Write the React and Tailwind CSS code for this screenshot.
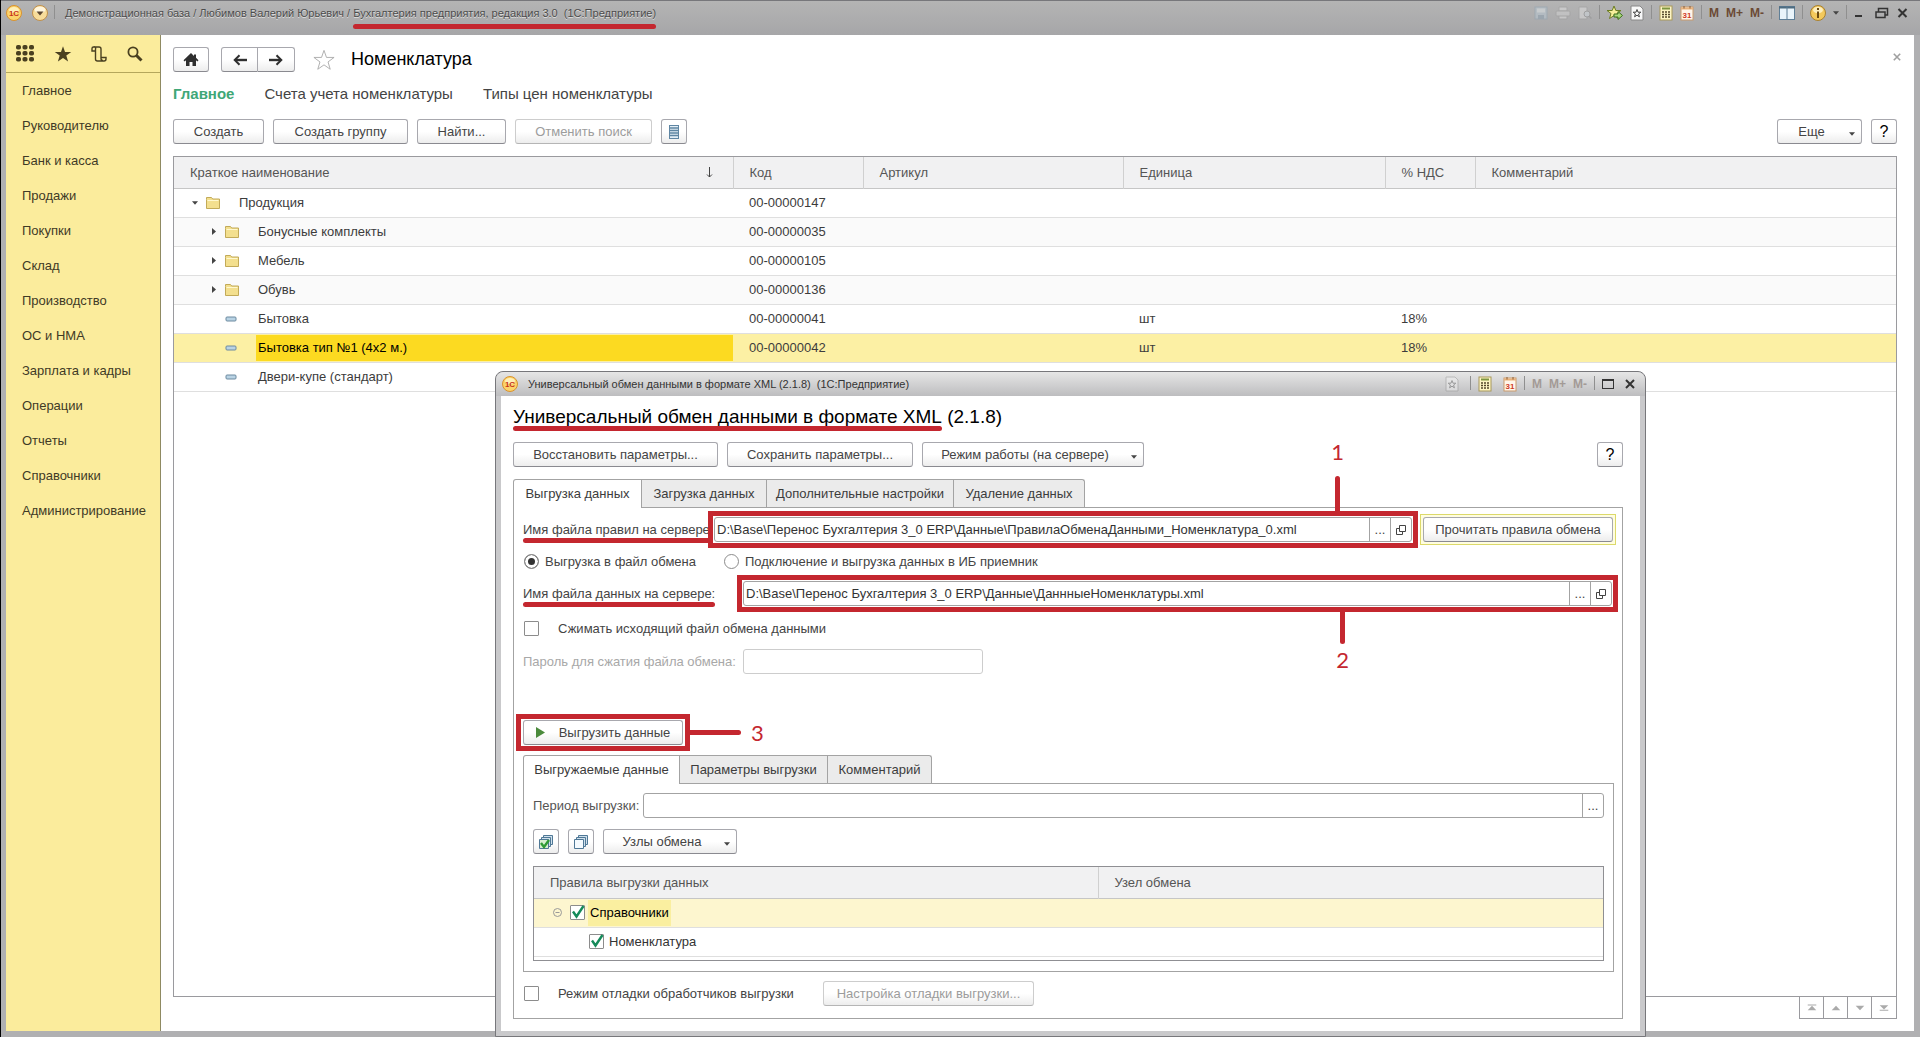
import React from "react";

const sections = [
  "Главное",
  "Руководителю",
  "Банк и касса",
  "Продажи",
  "Покупки",
  "Склад",
  "Производство",
  "ОС и НМА",
  "Зарплата и кадры",
  "Операции",
  "Отчеты",
  "Справочники",
  "Администрирование",
];

const items = [
  { name: "Продукция", code: "00-00000147", type: "root" },
  { name: "Бонусные комплекты", code: "00-00000035", type: "folder" },
  { name: "Мебель", code: "00-00000105", type: "folder" },
  { name: "Обувь", code: "00-00000136", type: "folder" },
  { name: "Бытовка", code: "00-00000041", type: "item", unit: "шт", vat: "18%" },
  {
    name: "Бытовка тип №1 (4x2 м.)",
    code: "00-00000042",
    type: "item",
    unit: "шт",
    vat: "18%",
    selected: true,
  },
  { name: "Двери-купе (стандарт)", type: "item" },
];

/* ---------- Icons ---------- */

const LogoIcon = () => (
  <svg viewBox="0 0 16 16" className="w-4 h-4 shrink-0">
    <circle cx="8" cy="8" r="7.5" fill="#fbd36b" stroke="#d9922e" />
    <ellipse cx="8" cy="5" rx="5" ry="3" fill="#fff0b8" />
    <text x="8" y="11" fontSize="8" fontWeight="bold" textAnchor="middle" fill="#c8321c">
      1С
    </text>
  </svg>
);

const MenuIcon = () => (
  <svg viewBox="0 0 16 16" className="w-4 h-4">
    <circle cx="8" cy="8" r="7.5" fill="#f7dc9a" stroke="#c08f4a" />
    <ellipse cx="8" cy="4.8" rx="5.5" ry="3.2" fill="#fff6dd" />
    <path d="M4.5 6.5h7L8 10.5z" fill="#5c4630" />
  </svg>
);

const HomeIcon = () => (
  <svg viewBox="0 0 16 14" className="w-4 h-3.5" fill="#2f2f2f">
    <path d="M8 0L0.500 7.200l1.200 1.300L3 7.300V13h3.500V9h3v4H13V7.300l1.300 1.200 1.200-1.300L13 4.800V1.500h-2v1.400z" />
  </svg>
);

const ArrowIcon = ({ flip }) => (
  <svg viewBox="0 0 14 12" className={`w-3.5 h-3 ${flip ? "rotate-180" : ""}`}>
    <path d="M14 6H3" stroke="#2f2f2f" strokeWidth="2.400" />
    <path d="M6.500 1.200L1.700 6l4.800 4.800" fill="none" stroke="#2f2f2f" strokeWidth="2" />
  </svg>
);

const StarIcon = ({ className }) => (
  <svg viewBox="0 0 24 24" className={className}>
    <path d="M12 1.500l2.700 7.700H23l-6.600 4.900 2.400 8L12 17.300 5.200 22.100l2.400-8L1 9.200h8.300z" />
  </svg>
);

const FolderIcon = () => (
  <svg viewBox="0 0 14 12" className="w-3.5 h-3 shrink-0">
    <path d="M.5 2.500v-2h5l1.200 1.500h6.800v9.500H.5z" fill="#f3df8e" stroke="#c2aa58" />
    <path d="M1.500 3.500h11" stroke="#fff8cf" />
  </svg>
);

const ItemIcon = () => (
  <svg viewBox="0 0 12 6" className="w-3 h-1.5 shrink-0">
    <rect x="1" y="1" width="10" height="4" rx="1" fill="#b9d3e4" stroke="#6c8aa0" />
  </svg>
);

const CaretIcon = () => (
  <svg viewBox="0 0 7 4" className="w-1.5 h-1 shrink-0" fill="#444">
    <path d="M0 0h7L3.500 4z" />
  </svg>
);

const CalcIcon = () => (
  <svg viewBox="0 0 14 16" className="w-3.5 h-4">
    <rect x="1" y="1" width="12" height="14" fill="#fdf5c4" stroke="#a8985a" />
    <path d="M3 3.500h8" stroke="#7d9440" strokeWidth="2" />
    <path d="M3 7h8M3 9.500h8M3 12h8" stroke="#54482c" strokeWidth="1.500" strokeDasharray="2 1" />
  </svg>
);

const CalendarIcon = () => (
  <svg viewBox="0 0 14 16" className="w-3.5 h-4">
    <rect x="1" y="2" width="12" height="13" fill="#fff6ea" stroke="#c99a6c" />
    <path d="M1 3.500h12" stroke="#e8b27c" strokeWidth="2" />
    <path d="M4 1v2.500M10 1v2.500" stroke="#8a5a30" />
    <text x="7" y="13" fontSize="8" fontWeight="bold" textAnchor="middle" fill="#cf3b1f">
      31
    </text>
  </svg>
);

const FavPageIcon = () => (
  <svg viewBox="0 0 14 16" className="w-3.5 h-4">
    <path d="M1 1h9l3 3v11H1z" fill="#f7f7f7" stroke="#888" />
    <path d="M7 4.500l1 2.700h2.800L8.600 9l.8 2.800L7 10.200l-2.400 1.600L5.400 9 3.200 7.200H6z" fill="none" stroke="#444" />
  </svg>
);

const FavAddIcon = () => (
  <svg viewBox="0 0 16 16" className="w-4 h-4">
    <path d="M7 1l1.800 4.500H14L10 8.500l1.500 5L7 10.600 2.500 13.500 4 8.500 0 5.500h5.200z" fill="#f6ef9a" stroke="#6b7d22" />
    <path d="M7 9h4V6.500l4.500 4-4.500 4V12H7z" fill="#a9d97c" stroke="#3c6f1c" />
  </svg>
);

const SaveIcon = () => (
  <svg viewBox="0 0 14 14" className="w-3.5 h-3.5 opacity-50">
    <rect x="1" y="1" width="12" height="12" fill="#b8c8d4" stroke="#8fa3b1" />
    <path d="M3 2.500h8v4H3z" fill="#dfe6ea" />
    <path d="M4 9h6v4H4z" fill="#8ba0b0" />
  </svg>
);

const PrintIcon = () => (
  <svg viewBox="0 0 16 14" className="w-4 h-3.5 opacity-40">
    <path d="M4 1h8v4H4zM4 9h8v4H4z" fill="#eee" stroke="#999" />
    <rect x="1" y="5" width="14" height="5" rx="1" fill="#ddd" stroke="#999" />
  </svg>
);

const PreviewIcon = () => (
  <svg viewBox="0 0 14 14" className="w-3.5 h-3.5 opacity-40">
    <path d="M1 1h8v12H1z" fill="#eee" stroke="#999" />
    <circle cx="9" cy="8" r="3" fill="#dde7ee" stroke="#888" />
    <path d="M11 10l2.500 2.500" stroke="#888" strokeWidth="1.500" />
  </svg>
);

const PanelsIcon = () => (
  <svg viewBox="0 0 16 14" className="w-4 h-3.5">
    <rect x=".5" y=".5" width="15" height="13" fill="#eaf4fa" stroke="#5f7f97" />
    <path d="M0 1.500h16" stroke="#4f6c80" strokeWidth="2" />
    <path d="M8 1v13" stroke="#5f7f97" />
  </svg>
);

const InfoIcon = () => (
  <svg viewBox="0 0 16 16" className="w-4 h-4">
    <circle cx="8" cy="8" r="7.500" fill="#f3c95c" stroke="#a9812f" />
    <ellipse cx="8" cy="5" rx="5" ry="3.200" fill="#fdeebd" />
    <path d="M8 3v2M8 6.500V13" stroke="#6a4a12" strokeWidth="2" />
  </svg>
);

const CloseIcon = ({ className }) => (
  <svg viewBox="0 0 10 10" className={className}>
    <path d="M1 1l8 8M9 1L1 9" fill="none" stroke="currentColor" strokeWidth="2" />
  </svg>
);

const OpenIcon = () => (
  <svg viewBox="0 0 10 10" className="w-2.5 h-2.5" fill="none" stroke="#444">
    <path d="M3.500.5h6v6h-6zM3.500 3.500h-3v6h6v-3" />
  </svg>
);

const StackIcon = ({ checked }) => (
  <svg viewBox="0 0 16 16" className="w-4 h-4" fill="#cfe0ec" stroke="#4f7896">
    <path d="M5.500 1.500h9v9h-9z" />
    <path d="M3.500 3.500h9v9h-9z" />
    <path d="M1.500 5.500h9v9h-9z" fill={checked ? "#d7efd0" : "#f4fafe"} />
    {checked && <path d="M3 9l3 4 5-7" fill="none" stroke="#2f9a35" strokeWidth="2.400" />}
  </svg>
);

/* ---------- Controls ---------- */

const Button = ({ className = "", disabled, children, ...rest }) => (
  <button
    type="button"
    disabled={disabled}
    className={`h-[25px] shrink-0 flex items-center justify-center rounded-[3px] border bg-gradient-to-b from-white from-50% to-[#ededed] whitespace-nowrap ${
      disabled
        ? "border-[#cdcdcd] border-b-[#b5b5b5] text-[#9c9c9c]"
        : "border-[#a8a8ae] border-b-[#8a8a90] text-[#444]"
    } ${className}`}
    {...rest}
  >
    {children}
  </button>
);

const MenuButton = ({ className, children }) => (
  <Button className={`relative pr-4 ${className}`} aria-haspopup="menu">
    {children}
    <span className="absolute right-1.5 top-3">
      <CaretIcon />
    </span>
  </Button>
);

const Separator = () => <span className="w-px h-3.5 bg-[#8f8f8f] self-start" />;

const TickBox = ({ id, checked }) => (
  <span className="relative w-[15px] h-[15px] shrink-0">
    <input
      id={id}
      type="checkbox"
      defaultChecked={checked}
      className="block appearance-none w-[15px] h-[15px] bg-white border border-[#8c8c8c] rounded-[1px]"
    />
    {checked && (
      <svg viewBox="0 0 15 15" className="absolute inset-0 w-[15px] h-[15px] pointer-events-none">
        <path d="M3 6.500l3.500 5L13.500 1" fill="none" stroke="#158a5a" strokeWidth="2.400" />
      </svg>
    )}
  </span>
);

const Radio = ({ id, checked }) => (
  <input
    id={id}
    type="radio"
    name="mode"
    defaultChecked={checked}
    className="appearance-none w-[15px] h-[15px] shrink-0 rounded-full border border-[#8c8c8c] bg-white checked:bg-[#333] checked:shadow-[inset_0_0_0_3px_white]"
  />
);

const Tabs = ({ tabs }) => (
  <div role="tablist" className="flex">
    {tabs.map((tab, idx) => (
      <button
        key={tab.title}
        type="button"
        role="tab"
        aria-selected={idx === 0}
        className={`border-t border-r border-[#a3a3a3] text-[#3c3c3c] whitespace-nowrap ${tab.width} ${
          idx === 0 ? "relative z-10 h-[29px] -mb-px border-l bg-white rounded-tl-[3px]" : "h-7 bg-[#ebebeb]"
        } ${idx === tabs.length - 1 ? "rounded-tr-[3px]" : ""}`}
      >
        {tab.title}
      </button>
    ))}
  </div>
);

const PathField = ({ id, value }) => (
  <div className="flex flex-1 h-[25px] border border-[#a3a3a3] rounded-[3px] bg-white">
    <input id={id} defaultValue={value} className="flex-1 min-w-0 px-0.5 text-[#333] outline-none" />
    <button type="button" aria-label="Выбрать" className="w-[21px] border-l border-[#a3a3a3] text-[#444]">
      ...
    </button>
    <button
      type="button"
      aria-label="Открыть"
      className="w-[21px] border-l border-[#a3a3a3] flex items-center justify-center"
    >
      <OpenIcon />
    </button>
  </div>
);

/* ---------- Red marks ---------- */

const Underline = ({ children, className = "-bottom-1.5" }) => (
  <span className="relative">
    {children}
    <span className={`absolute inset-x-0 h-[5px] rounded-full bg-[#c4272f] ${className}`} />
  </span>
);

const StepNumber = ({ children }) => (
  <span className="font-['Lato',sans-serif] text-[22px] leading-8 text-[#c4272f]">{children}</span>
);

/* ---------- Main window ---------- */

const TitleBar = () => (
  <header className="h-[35px] shrink-0 flex items-start bg-gradient-to-b from-[#b4b4b4] to-[#a6a6a8] border-t border-[#77777b] pl-[5px] pr-3 pt-1">
    <div className="flex items-center gap-1.5 h-4">
      <LogoIcon />
      <button type="button" aria-label="Меню" className="ml-1">
        <MenuIcon />
      </button>
      <Separator />
    </div>
    <p className="ml-2.5 h-4 text-[11px] leading-4 whitespace-pre text-[#4c4c4c] [text-shadow:0_1px_0_#ddd]">
      Демонстрационная база / Любимов Валерий Юрьевич /{" "}
      <Underline className="-bottom-2.5">Бухгалтерия предприятия, редакция 3.0&nbsp; (1С:Предприятие)</Underline>
    </p>
    <div className="ml-auto flex items-center gap-[7px] h-4 text-xs text-[#6b4a35] font-bold">
      <SaveIcon />
      <PrintIcon />
      <PreviewIcon />
      <Separator />
      <FavAddIcon />
      <FavPageIcon />
      <Separator />
      <CalcIcon />
      <CalendarIcon />
      <Separator />
      <button type="button">M</button>
      <button type="button">M+</button>
      <button type="button">M-</button>
      <Separator />
      <PanelsIcon />
      <Separator />
      <InfoIcon />
      <CaretIcon />
      <Separator />
      <svg viewBox="0 0 54 12" className="w-[54px] h-3" fill="none" stroke="#333" strokeWidth="2">
        <path d="M1 9h7M44.500 2l8 8M52.500 2l-8 8" />
        <path d="M22 5h9v5.500h-9zM24.500 5V1.500h9V8H31" strokeWidth="1.500" />
      </svg>
    </div>
  </header>
);

const Sidebar = () => (
  <aside className="w-[155px] shrink-0 bg-[#fbec9c] border-r border-[#8f8a62]">
    <div className="h-[38px] flex items-center justify-between pl-2.5 pr-[17px] border-b border-[#b5a75c]">
      <svg viewBox="0 0 18 17" className="w-[18px] h-[17px]" fill="#4a4020">
        {[0, 6.5, 13].map((x) =>
          [0, 6, 12].map((y) => <rect key={`${x}-${y}`} x={x} y={y} width="5" height="4.600" rx="1.800" />)
        )}
      </svg>
      <StarIcon className="w-[18px] h-[18px] fill-[#4a4020]" />
      <svg viewBox="0 0 16 16" className="w-4 h-4" fill="none" stroke="#4a4020" strokeWidth="1.400">
        <path d="M4 5H1V2.500A1.500 1.500 0 0 1 2.500 1H8a2 2 0 0 1 2 2v8.500h5v1.500a2 2 0 0 1-2 2H6.500a2 2 0 0 1-2-2V3A1.500 1.500 0 0 0 2.500 1M10 11.500v1a2 2 0 0 0 2 2" />
      </svg>
      <svg viewBox="0 0 16 16" className="w-4 h-4" fill="none" stroke="#4a4020">
        <circle cx="6" cy="6" r="4.600" strokeWidth="1.800" />
        <path d="M9.500 9.500l5 5" strokeWidth="3" />
      </svg>
    </div>
    <nav className="flex flex-col">
      {sections.map((section) => (
        <a key={section} href="#" className="h-[35px] leading-[35px] pl-4 text-[#3f3a26]">
          {section}
        </a>
      ))}
    </nav>
  </aside>
);

const NameCell = ({ item }) => {
  if (item.type === "root") {
    return (
      <div className="flex items-center h-7 pl-[18px]">
        <CaretIcon />
        <span className="ml-2">
          <FolderIcon />
        </span>
        <span className="ml-[19px]">{item.name}</span>
      </div>
    );
  }
  return (
    <div className="flex items-center h-7 pl-[38px]">
      <span className="w-[13px]">
        {item.type === "folder" && (
          <svg viewBox="0 0 4 7" className="w-1 h-[7px]" fill="#444">
            <path d="M0 0v7l4-3.500z" />
          </svg>
        )}
      </span>
      <span className="w-[31px]">{item.type === "folder" ? <FolderIcon /> : <ItemIcon />}</span>
      <span
        className={`flex-1 pl-0.5 h-[26px] leading-[26px] ${item.selected ? "bg-[#fcda21] text-black" : ""}`}
      >
        {item.name}
      </span>
    </div>
  );
};

const ItemsTable = () => (
  <div className="flex-1 border border-[#9a9a9e] bg-white">
    <table className="w-full table-fixed border-collapse text-left text-[#3c3c3c]">
      <colgroup>
        <col className="w-[559px]" />
        <col className="w-[130px]" />
        <col className="w-[260px]" />
        <col className="w-[262px]" />
        <col className="w-[90px]" />
        <col />
      </colgroup>
      <thead>
        <tr className="h-[31px] bg-[#f1f1f2] border-b border-[#c6c6c6] text-[#555]">
          <th className="font-normal pl-4 border-r border-[#d0d0d0]">
            <span className="flex items-center justify-between pr-5">
              Краткое наименование
              <svg viewBox="0 0 7 11" className="w-[7px] h-[11px]" fill="none" stroke="#444">
                <path d="M3.500 0v10M1 7.500l2.500 2.500L6 7.500" />
              </svg>
            </span>
          </th>
          <th className="font-normal pl-4 border-r border-[#d0d0d0]">Код</th>
          <th className="font-normal pl-4 border-r border-[#d0d0d0]">Артикул</th>
          <th className="font-normal pl-4 border-r border-[#d0d0d0]">Единица</th>
          <th className="font-normal pl-4 border-r border-[#d0d0d0]">% НДС</th>
          <th className="font-normal pl-4">Комментарий</th>
        </tr>
      </thead>
      <tbody>
        {items.map((item, idx) => (
          <tr
            key={item.name}
            className={`h-[29px] border-b border-[#dfdfdf] ${
              item.selected ? "bg-[#fcf0a4]" : idx % 2 && idx < 4 ? "bg-[#fafafa]" : ""
            }`}
          >
            <td className="p-0">
              <NameCell item={item} />
            </td>
            <td className="pl-4">{item.code}</td>
            <td />
            <td className="pl-4">{item.unit}</td>
            <td className="pl-4">{item.vat}</td>
            <td />
          </tr>
        ))}
      </tbody>
    </table>
  </div>
);

const scrollArrows = [
  { label: "В начало", d: "M1 1h12v1.500H1zM7 3l6 6H1z" },
  { label: "Вверх", d: "M7 3l6 6H1z" },
  { label: "Вниз", d: "M7 9l6-6H1z" },
  { label: "В конец", d: "M7 8l6-6H1zM1 8.500h12V10H1z" },
];

const ItemsView = () => (
  <main className="flex-1 min-w-0 flex flex-col bg-white pl-3 pr-[17px] pt-3 pb-3">
    <div className="flex items-center">
      <Button className="w-9" aria-label="Домой">
        <HomeIcon />
      </Button>
      <Button className="w-[37px] ml-3 rounded-r-none" aria-label="Назад">
        <ArrowIcon />
      </Button>
      <Button className="w-[37px] rounded-l-none border-l-0" aria-label="Вперед">
        <ArrowIcon flip />
      </Button>
      <StarIcon className="w-[22px] h-[22px] ml-[18px] fill-white stroke-[#aaa]" />
      <h1 className="ml-4 text-lg leading-[25px] text-black">Номенклатура</h1>
      <button type="button" aria-label="Закрыть" className="ml-auto self-start mt-1.5 -mr-1 text-[#a0a0a0]">
        <CloseIcon className="w-2 h-2" />
      </button>
    </div>
    <nav className="flex gap-[30px] mt-2.5 text-[15px] leading-6 text-[#444]">
      <a href="#" className="font-bold text-[#3fa777]">
        Главное
      </a>
      <a href="#">Счета учета номенклатуры</a>
      <a href="#">Типы цен номенклатуры</a>
    </nav>
    <div className="flex gap-[9px] mt-[13px] mb-3">
      <Button className="w-[91px]">Создать</Button>
      <Button className="w-[135px]">Создать группу</Button>
      <Button className="w-[89px]">Найти...</Button>
      <Button className="w-[137px]" disabled>
        Отменить поиск
      </Button>
      <Button className="w-[26px]" aria-label="Список">
        <svg viewBox="0 0 10 14" className="w-2.5 h-3.5">
          <rect x=".5" y=".5" width="9" height="13" fill="#e3eef6" stroke="#5f86a3" />
          <path d="M1 3h8M1 5.500h8M1 8h8M1 10.500h8" stroke="#5f86a3" strokeWidth="1.300" />
        </svg>
      </Button>
      <MenuButton className="w-[85px] ml-auto">Еще</MenuButton>
      <Button className="w-[26px] text-base text-black">?</Button>
    </div>
    <ItemsTable />
    <div className="flex justify-end">
      <div className="flex border border-t-0 border-[#9a9a9e] divide-x divide-[#9a9a9e]">
        {scrollArrows.map((arrow) => (
          <button
            key={arrow.label}
            type="button"
            aria-label={arrow.label}
            className="w-6 h-[21px] flex items-center justify-center"
          >
            <svg viewBox="0 0 14 12" className="w-2.5 h-2.5" fill="#aaa">
              <path d={arrow.d} />
            </svg>
          </button>
        ))}
      </div>
    </div>
  </main>
);

/* ---------- Exchange dialog ---------- */

const RulesTable = () => (
  <div className="mt-3 h-[95px] border border-[#8f8f93]">
    <table className="w-full table-fixed border-collapse text-left text-[#333]">
      <colgroup>
        <col className="w-[564px]" />
        <col />
      </colgroup>
      <thead>
        <tr className="h-[31px] bg-[#f1f1f2] border-b border-[#c6c6c6] text-[#555]">
          <th className="font-normal pl-4 border-r border-[#d0d0d0]">Правила выгрузки данных</th>
          <th className="font-normal pl-4">Узел обмена</th>
        </tr>
      </thead>
      <tbody>
        <tr className="h-[29px] bg-[#fdf6cf] border-b border-[#dfdfdf]">
          <td className="p-0">
            <div className="flex items-center pl-[19px]">
              <svg viewBox="0 0 9 9" className="w-[9px] h-[9px] mr-2" fill="none" stroke="#999">
                <circle cx="4.500" cy="4.500" r="4" />
                <path d="M2.500 4.500h4" />
              </svg>
              <TickBox id="catalogs" checked />
              <label htmlFor="catalogs" className="ml-[3px] px-0.5 leading-[26px] bg-[#faefa0] text-black">
                Справочники
              </label>
            </div>
          </td>
          <td />
        </tr>
        <tr className="h-[29px] border-b border-[#dfdfdf]">
          <td className="p-0">
            <div className="flex items-center pl-[55px]">
              <TickBox id="items" checked />
              <label htmlFor="items" className="ml-[3px] px-0.5">
                Номенклатура
              </label>
            </div>
          </td>
          <td />
        </tr>
      </tbody>
    </table>
  </div>
);

const ExportTab = () => (
  <div className="mt-1 mr-1">
    <Tabs
      tabs={[
        { title: "Выгружаемые данные", width: "w-[157px]" },
        { title: "Параметры выгрузки", width: "w-[148px]" },
        { title: "Комментарий", width: "w-[104px]" },
      ]}
    />
    <div className="border border-[#a3a3a3] px-[9px] pt-[9px] pb-2.5">
      <div className="flex items-center">
        <label htmlFor="period" className="w-[110px] text-[#555] whitespace-nowrap">
          Период выгрузки:
        </label>
        <div className="flex flex-1 h-[25px] border border-[#a3a3a3] rounded-[3px]">
          <input id="period" className="flex-1 min-w-0 px-1 outline-none" />
          <button
            type="button"
            aria-label="Выбрать период"
            className="w-[21px] border-l border-[#a3a3a3] text-[#444]"
          >
            ...
          </button>
        </div>
      </div>
      <div className="flex gap-[9px] mt-[11px]">
        <Button className="w-[26px]" aria-label="Отметить все">
          <StackIcon checked />
        </Button>
        <Button className="w-[26px]" aria-label="Снять отметки">
          <StackIcon />
        </Button>
        <MenuButton className="w-[134px]">Узлы обмена</MenuButton>
      </div>
      <RulesTable />
    </div>
  </div>
);

const ExchangeForm = () => (
  <div className="flex-1 flex flex-col border border-[#a3a3a3] pl-[9px] pr-1 pt-[3px] pb-2.5 text-[#444]">
    <div className="flex items-center mr-0.5">
      <label htmlFor="rules" className="w-[185px] whitespace-nowrap">
        <Underline>Имя файла правил на сервере:</Underline>
      </label>
      <div className="relative flex-1 flex border-[5px] border-[#c4272f] p-px">
        <PathField
          id="rules"
          value="D:\Base\Перенос Бухгалтерия 3_0 ERP\Данные\ПравилаОбменаДанными_Номенклатура_0.xml"
        />
        <span className="absolute right-[69px] bottom-full flex flex-col items-center">
          <StepNumber>1</StepNumber>
          <span className="w-[5px] h-10 mt-2 rounded-t-full bg-[#c4272f]" />
        </span>
      </div>
      <div className="ml-0.5 border border-[#dcd96a] bg-[#fffde0] p-0.5">
        <Button className="w-[190px]">Прочитать правила обмена</Button>
      </div>
    </div>

    <div className="flex items-center h-[27px] pl-px">
      <div className="flex items-center gap-1.5 w-[200px]">
        <Radio id="to-file" checked />
        <label htmlFor="to-file">Выгрузка в файл обмена</label>
      </div>
      <div className="flex items-center gap-1.5">
        <Radio id="to-base" />
        <label htmlFor="to-base">Подключение и выгрузка данных в ИБ приемник</label>
      </div>
    </div>

    <div className="flex items-center">
      <label htmlFor="data" className="w-[214px] whitespace-nowrap">
        <Underline>Имя файла данных на сервере:</Underline>
      </label>
      <div className="relative flex-1 flex border-[5px] border-[#c4272f] p-px">
        <PathField id="data" value="D:\Base\Перенос Бухгалтерия 3_0 ERP\Данные\ДаннныеНоменклатуры.xml" />
        <span className="absolute right-[264px] top-full flex flex-col items-center">
          <span className="w-[5px] h-[37px] rounded-b-full bg-[#c4272f]" />
          <StepNumber>2</StepNumber>
        </span>
      </div>
    </div>

    <div className="flex items-center h-[33px] pl-px">
      <TickBox id="compress" />
      <label htmlFor="compress" className="ml-[19px]">
        Сжимать исходящий файл обмена данными
      </label>
    </div>

    <div className="flex items-center mt-1">
      <label htmlFor="password" className="w-[220px] text-[#a8a8a8]">
        Пароль для сжатия файла обмена:
      </label>
      <input
        id="password"
        type="password"
        disabled
        className="w-60 h-[25px] px-1 border border-[#cdcdcd] rounded-[3px] bg-white"
      />
    </div>

    <div className="flex items-center mt-10 -ml-[7px]">
      <div className="relative border-[5px] border-[#c4272f] px-0.5 py-px">
        <Button className="w-40">
          <svg viewBox="0 0 9 11" className="w-[9px] h-[11px] mr-3.5" fill="#4b8a3c">
            <path d="M0 0v11l9-5.500z" />
          </svg>
          Выгрузить данные
        </Button>
        <span className="absolute left-full inset-y-0 flex items-center">
          <span className="w-14 h-[5px] rounded-r-full bg-[#c4272f]" />
          <span className="ml-2.5 flex">
            <StepNumber>3</StepNumber>
          </span>
        </span>
      </div>
    </div>

    <ExportTab />

    <div className="flex items-center mt-[9px] pl-px">
      <TickBox id="debug" />
      <label htmlFor="debug" className="w-[265px] ml-[19px]">
        Режим отладки обработчиков выгрузки
      </label>
      <Button className="w-[211px]" disabled>
        Настройка отладки выгрузки...
      </Button>
    </div>
  </div>
);

const ExchangeDialog = () => (
  <div
    role="dialog"
    aria-label="Универсальный обмен данными в формате XML"
    className="absolute left-[494px] right-[274px] top-[371px] bottom-0 flex flex-col rounded-t-lg border border-[#77777b] bg-[#c9c9cb]"
  >
    <div className="h-6 shrink-0 flex items-center rounded-t-lg bg-gradient-to-b from-[#e6e6e6] to-[#bdbdbf] pl-1.5 pr-2.5 text-[#333]">
      <LogoIcon />
      <p className="ml-2.5 text-[11px] whitespace-pre">
        Универсальный обмен данными в формате XML (2.1.8)&nbsp; (1С:Предприятие)
      </p>
      <div className="ml-auto flex items-center gap-[7px] h-4 text-xs font-bold text-[#a39a96]">
        <span className="mr-1 opacity-40">
          <FavPageIcon />
        </span>
        <Separator />
        <CalcIcon />
        <span className="ml-1">
          <CalendarIcon />
        </span>
        <Separator />
        <span>M</span>
        <span>M+</span>
        <span>M-</span>
        <Separator />
        <button type="button" aria-label="Развернуть" className="w-3 h-2.5 border border-t-2 border-[#333]" />
        <button type="button" aria-label="Закрыть окно" className="ml-1 text-[#333]">
          <CloseIcon className="w-2.5 h-2.5" />
        </button>
      </div>
    </div>
    <div className="flex-1 flex flex-col bg-white mx-[5px] mb-[5px] pl-3 pr-[17px] pt-[7px] pb-3">
      <h2 className="text-[19px] leading-7 text-black">
        <Underline className="-bottom-1">Универсальный обмен данными в формате XML</Underline> (2.1.8)
      </h2>
      <div className="flex gap-[9px] mt-[11px] mb-3">
        <Button className="w-[205px]">Восстановить параметры...</Button>
        <Button className="w-[186px]">Сохранить параметры...</Button>
        <MenuButton className="w-[222px]">Режим работы (на сервере)</MenuButton>
        <Button className="w-[26px] ml-auto text-base text-black">?</Button>
      </div>
      <Tabs
        tabs={[
          { title: "Выгрузка данных", width: "w-[129px]" },
          { title: "Загрузка данных", width: "w-[125px]" },
          { title: "Дополнительные настройки", width: "w-[187px]" },
          { title: "Удаление данных", width: "w-[131px]" },
        ]}
      />
      <ExchangeForm />
    </div>
  </div>
);

const App = () => (
  <div className="relative min-h-screen flex flex-col bg-[#b0b0b2] font-['Liberation_Sans',Arial,sans-serif] text-[13px] border-l border-black">
    <TitleBar />
    <div className="flex-1 flex pl-[5px] pr-1.5 pb-1.5">
      <Sidebar />
      <ItemsView />
    </div>
    <ExchangeDialog />
  </div>
);

export default App;
